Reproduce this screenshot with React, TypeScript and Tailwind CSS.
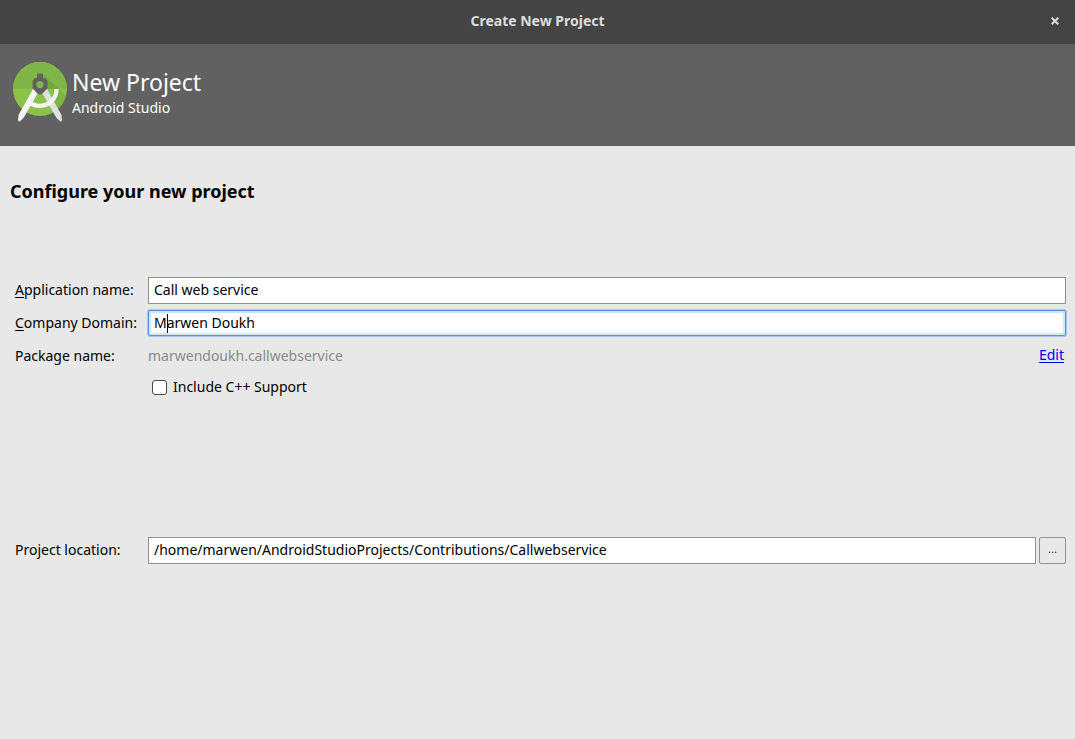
import { useState } from 'react';

function StudioLogo() {
  return (
    <svg className="w-14 h-16 shrink-0" viewBox="0 0 56 64" aria-hidden="true">
      <defs>
        <clipPath id="disc">
          <circle cx="28" cy="29" r="27" />
        </clipPath>
      </defs>
      <circle cx="28" cy="29" r="27" fill="#8bc34a" />
      <g clipPath="url(#disc)">
        <rect x="0" y="0" width="56" height="29" fill="#80b648" />
        <path d="M31 14 L47 29 L35 29 Z" fill="#558b2f" opacity="0.35" />
        <path d="M47 29 L55 37 L50 50 L43 50 L38 43 Z" fill="#558b2f" opacity="0.25" />
      </g>
      {/* compass legs */}
      <path d="M35 29 L30.5 33.5 L44.5 58 L49 62 L50 60 L49.5 55 Z" fill="#e0e0e0" />
      <path d="M21 29 L25.5 33.5 L11.5 58 L7 62 L6 60 L6.5 55 Z" fill="#f5f5f5" />
      {/* arc across the legs */}
      <path d="M17 42 C22 46 28 46.5 33 45 C40 43 44.5 37 44.5 29" fill="none" stroke="#f5f5f5" strokeWidth="4.2" />
      {/* hinge */}
      <path
        fillRule="evenodd"
        d="M25 14.5 Q25 13.5 26 13.5 H30 Q31 13.5 31 14.5 V18 H33 L35.5 21 V28 L31 33 L28 35 L25 33 L20.5 28 V21 L23 18 H25 Z M28 20.9 A3.6 3.6 0 1 0 28 28.1 A3.6 3.6 0 1 0 28 20.9 Z"
        fill="#616161"
      />
    </svg>
  );
}

const inputClass =
  'block w-full min-w-0 h-[27px] px-[5px] pb-[2px] bg-white border border-[#919191] text-black outline-none';

export default function App() {
  const [appName, setAppName] = useState('Call web service');
  const [domain, setDomain] = useState('Marwen Doukh');
  const [location, setLocation] = useState('/home/marwen/AndroidStudioProjects/Contributions/Callwebservice');
  const [cpp, setCpp] = useState(false);

  return (
    <div className="min-h-screen bg-[#e8e8e8] font-['Noto_Sans',sans-serif] text-[14px] leading-5 text-black">
      {/* Title bar */}
      <div className="grid grid-cols-[40px_1fr_40px] items-center h-11 pb-[2px] bg-[#444444] text-[#dcdcdc]">
        <span />
        <h1 className="text-center font-bold">Create New Project</h1>
        <button type="button" aria-label="Close" className="flex items-center justify-center h-10">
          <svg className="w-2 h-2" viewBox="0 0 8 8" stroke="currentColor" strokeWidth="2">
            <path d="M0.7 0.7 L7.3 7.3 M7.3 0.7 L0.7 7.3" />
          </svg>
        </button>
      </div>

      {/* Header */}
      <header className="flex items-center gap-1 h-[102px] px-3 pb-[6px] bg-[#616161] text-white">
        <StudioLogo />
        <div>
          <h2 className="text-[23px] leading-8">New Project</h2>
          <p>Android Studio</p>
        </div>
      </header>

      <main className="pl-[10px] pr-[9px] pt-[31px]">
        <h3 className="text-[18px] leading-7 font-bold">Configure your new project</h3>

        <form className="pl-[5px] pt-[72px]" onSubmit={(e) => e.preventDefault()}>
          <div className="grid grid-cols-[127px_1fr] gap-[6px]">
            <label htmlFor="app-name" className="leading-[25px]">
              <span className="underline underline-offset-2">A</span>pplication name:
            </label>
            <input
              id="app-name"
              type="text"
              className={inputClass}
              value={appName}
              onChange={(e) => setAppName(e.target.value)}
            />

            <label htmlFor="domain" className="leading-[25px]">
              <span className="underline underline-offset-2">C</span>ompany Domain:
            </label>
            <div className="relative">
              <input
                id="domain"
                type="text"
                className="block w-full h-[26px] px-[5px] pb-px bg-white border border-[#5294e2] rounded-xs text-black outline-none shadow-[0_0_0_1px_#a5c7ee,inset_0_0_0_2px_#d4e4f7]"
                value={domain}
                onChange={(e) => setDomain(e.target.value)}
              />
              {/* text cursor */}
              <span className="absolute left-[19px] top-1 w-px h-[19px] bg-black" />
            </div>

            <span className="leading-[27px]">Package name:</span>
            <div className="flex justify-between pr-[2px]">
              <span className="leading-[27px] text-[#8a8a8a]">marwendoukh.callwebservice</span>
              <a href="#edit" className="leading-[25px] text-[#0000ee] underline underline-offset-2">
                Edit
              </a>
            </div>

            <div className="col-start-2 flex items-center gap-[6px] h-6 pl-1">
              <input
                id="cpp"
                type="checkbox"
                className="appearance-none w-[15px] h-[15px] bg-white border border-[#4a4a4a] rounded-[3px] checked:bg-[#5294e2]"
                checked={cpp}
                onChange={(e) => setCpp(e.target.checked)}
              />
              <label htmlFor="cpp">Include C++ Support</label>
            </div>
          </div>

          <div className="grid grid-cols-[127px_1fr_27px] pt-[138px]">
            <label htmlFor="location" className="leading-[25px]">
              Project location:
            </label>
            <div className="pl-[6px] pr-[3px]">
              <input
                id="location"
                type="text"
                className={inputClass}
                value={location}
                onChange={(e) => setLocation(e.target.value)}
              />
            </div>
            <button
              type="button"
              aria-label="Browse"
              className="flex items-center justify-center h-[27px] pb-1 border border-[#919191] rounded-xs text-[11px] leading-3 text-[#333333]"
            >
              ...
            </button>
          </div>
        </form>
      </main>
    </div>
  );
}
